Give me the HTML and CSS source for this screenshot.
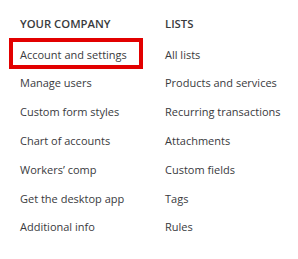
FILE: index.html
```
<!DOCTYPE html>
<html lang="en">
<head>
    <meta charset="UTF-8">
    <title>Settings</title>
    <link rel="stylesheet" href="styles.css">
</head>
<body>

<div class="menu">
    <div class="column company">
        <div class="heading">YOUR COMPANY</div>
        <div class="item active">Account and settings</div>
        <div class="item">Manage users</div>
        <div class="item">Custom form styles</div>
        <div class="item">Chart of accounts</div>
        <div class="item">Workers’ comp</div>
        <div class="item">Get the desktop app</div>
        <div class="item">Additional info</div>
    </div>
    <div class="column lists">
        <div class="heading">LISTS</div>
        <div class="item">All lists</div>
        <div class="item">Products and services</div>
        <div class="item">Recurring transactions</div>
        <div class="item">Attachments</div>
        <div class="item">Custom fields</div>
        <div class="item">Tags</div>
        <div class="item">Rules</div>
    </div>
</div>

</body>
</html>
```
FILE: styles.css
```
body {
    margin: 0;
    background: #fff;
    font-family: 'Open Sans', 'Noto Sans', sans-serif;
    color: #393a3d;
}
.menu {
    display: flex;
    padding: 15px 0 0 20px;
}
.column {
    display: flex;
    flex-direction: column;
    align-items: flex-start;
}
.company {
    width: 145px;
}
.heading {
    font-size: 11.3px;
    font-weight: 600;
    line-height: 18px;
    margin-bottom: 7.6px;
    white-space: nowrap;
}
.item {
    font-size: 11px;
    line-height: 18.8px;
    padding: 5px 0;
    white-space: nowrap;
}
.item.active {
    margin: -2.6px 0 0.4px -11px;
    padding: 3.6px 7px 0.6px;
    width: 112px;
    border: 4px solid #e20000;
}
```
